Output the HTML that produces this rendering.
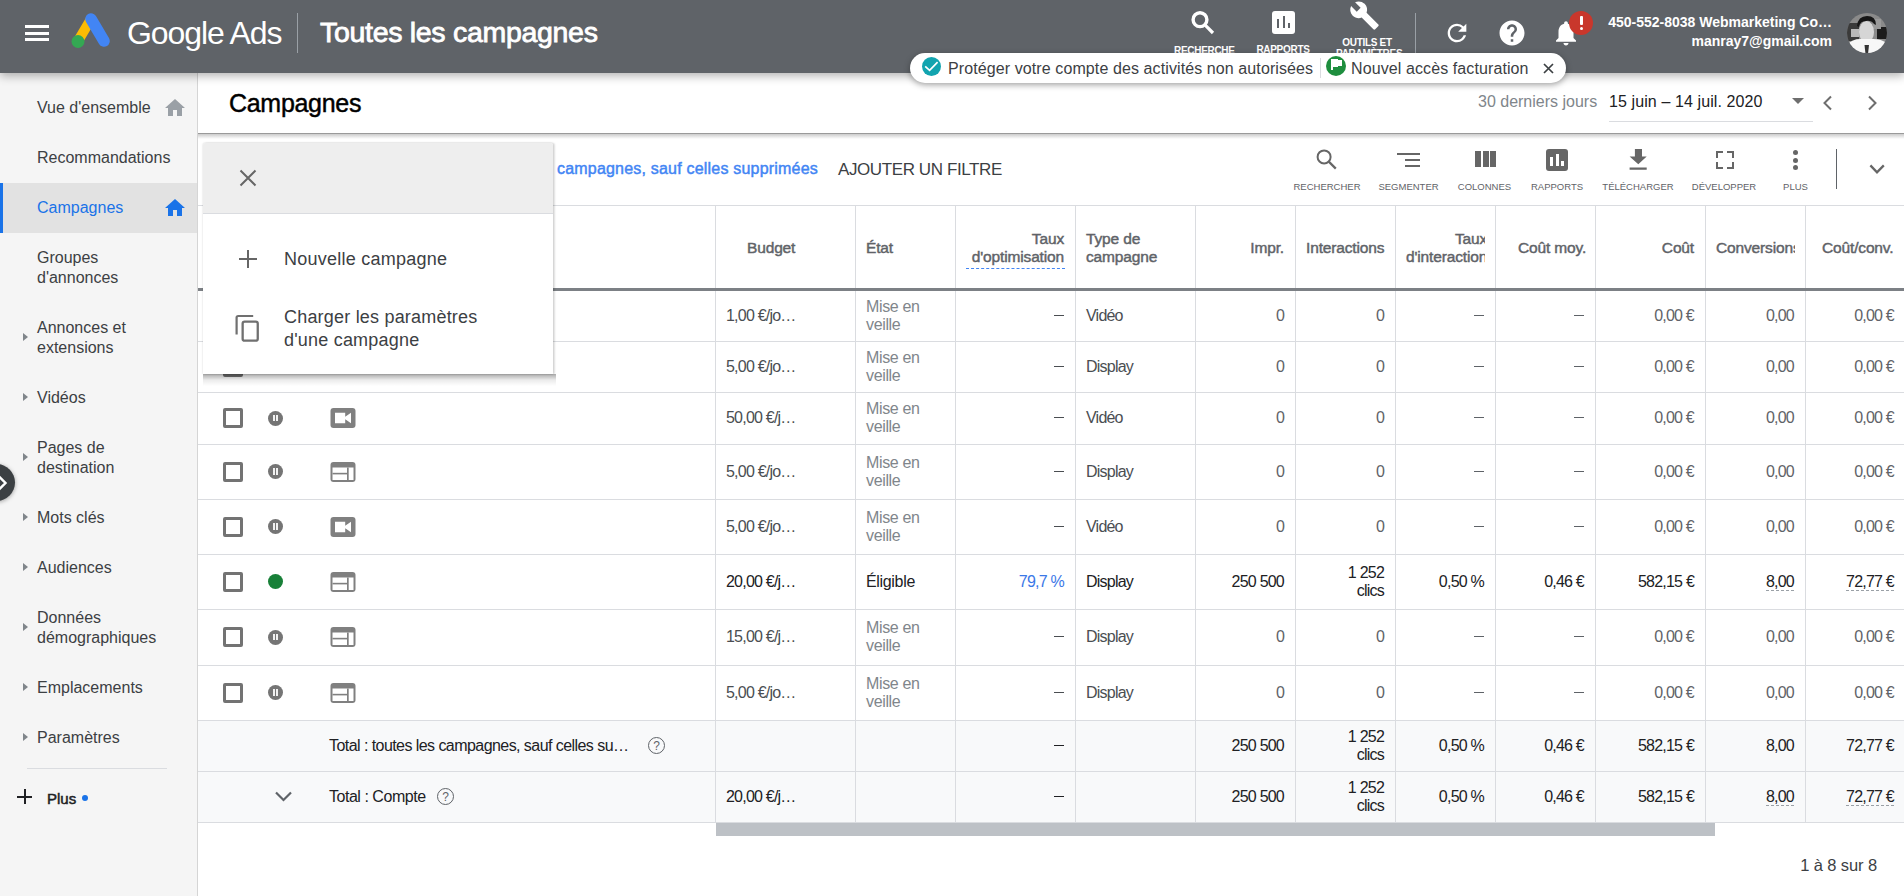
<!DOCTYPE html>
<html><head><meta charset="utf-8">
<style>
*{box-sizing:border-box;margin:0;padding:0}
html,body{width:1904px;height:896px;overflow:hidden;background:#fff;font-family:"Liberation Sans",sans-serif;color:#3c4043}
.a{position:absolute}
.nw{white-space:nowrap}
#top{position:absolute;left:0;top:0;width:1904px;height:73px;background:#5f6368;z-index:5;box-shadow:0 3px 9px rgba(0,0,0,.3)}
#side{position:absolute;left:0;top:72px;width:198px;height:824px;background:#f5f5f5;border-right:1px solid #d5d5d5;z-index:2}
.si{position:absolute;left:37px;font-size:16px;line-height:20px;color:#3c4043;white-space:nowrap}
.tri{position:absolute;left:22.5px;width:0;height:0;border-top:4.5px solid transparent;border-bottom:4.5px solid transparent;border-left:5px solid #80868b}
.hd{position:absolute;font-size:15.5px;color:#5f6368;line-height:18px;white-space:nowrap;letter-spacing:-0.15px;-webkit-text-stroke:0.45px #5f6368}
.vl{position:absolute;top:206px;width:1px;height:616px;background:#dadce0}
.hl{position:absolute;left:198px;width:1706px;height:1px;background:#dadce0}
.c{position:absolute;font-size:16px;line-height:18px;white-space:nowrap;letter-spacing:-0.78px}
.r{text-align:right}
</style></head><body>

<div id="top">
 <div class="a" style="left:25px;top:25px;width:24px;height:3px;background:#fff"></div>
 <div class="a" style="left:25px;top:31.5px;width:24px;height:3px;background:#fff"></div>
 <div class="a" style="left:25px;top:38px;width:24px;height:3px;background:#fff"></div>
 <svg class="a" style="left:70px;top:12px" width="42" height="38" viewBox="0 0 42 38">
  <line x1="21" y1="7" x2="8" y2="29" stroke="#fbbc04" stroke-width="10" stroke-linecap="round"/>
  <line x1="21" y1="7" x2="34" y2="29" stroke="#4285f4" stroke-width="11.5" stroke-linecap="round"/>
  <circle cx="8" cy="29.5" r="6.5" fill="#34a853"/>
 </svg>
 <div class="a nw" style="left:127px;top:13px;font-size:32px;line-height:40px;color:#fff;letter-spacing:-1.1px">Google Ads</div>
 <div class="a" style="left:297px;top:13px;width:1px;height:40px;background:#9aa0a6"></div>
 <div class="a nw" style="left:320px;top:14px;font-size:28.5px;line-height:36px;color:#fff;letter-spacing:-0.3px;-webkit-text-stroke:0.8px #fff">Toutes les campagnes</div>

<svg class="a" style="left:1180px;top:4px" width="48" height="36" viewBox="0 0 48 36"><circle cx="20" cy="15.7" r="6.9" stroke="#fff" stroke-width="3.4" fill="none"/><path d="M25.2 21.2 L33 29" stroke="#fff" stroke-width="3.2"/></svg>
<div class="a nw" style="left:1174px;top:44.5px;width:58px;text-align:center;font-size:10px;font-weight:700;color:#fff;letter-spacing:-0.3px">RECHERCHE</div>
<div class="a" style="left:1272px;top:10.5px;width:23px;height:23px;background:#fff;border-radius:3px"></div>
<div class="a" style="left:1277px;top:19.2px;width:2px;height:8.7px;background:#5f6368"></div>
<div class="a" style="left:1282.5px;top:16.1px;width:2px;height:11.8px;background:#5f6368"></div>
<div class="a" style="left:1287.7px;top:23.2px;width:2px;height:4.7px;background:#5f6368"></div>
<div class="a nw" style="left:1256px;top:43.5px;width:54px;text-align:center;font-size:10px;font-weight:700;color:#fff;letter-spacing:-0.3px">RAPPORTS</div>
<svg class="a" style="left:1348.5px;top:-0.5px" width="31" height="31" viewBox="0 0 24 24"><path fill="#fff" d="M22.7 19l-9.1-9.1c.9-2.3.4-5-1.5-6.9-2-2-5-2.4-7.4-1.3L9 6 6 9 1.6 4.7C.4 7.1.9 10.1 2.9 12.1c1.9 1.9 4.6 2.4 6.9 1.5l9.1 9.1c.4.4 1 .4 1.4 0l2.3-2.3c.5-.4.5-1.1.1-1.4z"/></svg>
<div class="a nw" style="left:1336px;top:37px;width:62px;text-align:center;font-size:10px;line-height:11px;font-weight:700;color:#fff;letter-spacing:-0.3px">OUTILS ET<br>PARAMÈTRES</div>
<div class="a" style="left:1415px;top:13px;width:1px;height:47px;background:#9aa0a6"></div>
<svg class="a" style="left:1443px;top:19px" width="28" height="28" viewBox="0 0 24 24"><path fill="#fff" d="M17.65 6.35A7.958 7.958 0 0 0 12 4c-4.42 0-7.99 3.58-7.99 8s3.57 8 7.99 8c3.73 0 6.84-2.55 7.73-6h-2.08A5.99 5.99 0 0 1 12 18c-3.31 0-6-2.69-6-6s2.69-6 6-6c1.66 0 3.14.69 4.22 1.78L13 11h7V4l-2.35 2.35z"/></svg>
<svg class="a" style="left:1497px;top:18px" width="30" height="30" viewBox="0 0 24 24"><path fill="#fff" d="M12 2C6.48 2 2 6.48 2 12s4.48 10 10 10 10-4.48 10-10S17.52 2 12 2zm1 17h-2v-2h2v2zm2.07-7.75l-.9.92C13.45 12.9 13 13.5 13 15h-2v-.5c0-1.1.45-2.1 1.17-2.83l1.24-1.26c.37-.36.59-.86.59-1.41 0-1.1-.9-2-2-2s-2 .9-2 2H8c0-2.21 1.79-4 4-4s4 1.79 4 4c0 .88-.36 1.68-.93 2.25z"/></svg>
<svg class="a" style="left:1551px;top:18px" width="30" height="30" viewBox="0 0 24 24"><path fill="#fff" d="M12 22c1.1 0 2-.9 2-2h-4c0 1.1.89 2 2 2zm6-6v-5c0-3.07-1.64-5.64-4.5-6.32V4c0-.83-.67-1.5-1.5-1.5s-1.5.67-1.5 1.5v.68C7.63 5.36 6 7.92 6 11v5l-2 2v1h16v-1l-2-2z"/></svg>
<div class="a" style="left:1569px;top:11px;width:24px;height:24px;border-radius:50%;background:#c9372c"></div>
<div class="a" style="left:1579.5px;top:16px;width:3px;height:9px;background:#fff;border-radius:1px"></div>
<div class="a" style="left:1579.5px;top:27px;width:3px;height:3px;background:#fff;border-radius:50%"></div>
<div class="a nw" style="left:1600px;top:13px;width:232px;text-align:right;font-size:14px;line-height:19px;font-weight:700;color:#fff">450-552-8038 Webmarketing Co…<br>manray7@gmail.com</div>
<svg class="a" style="left:1847px;top:13px" width="40" height="40" viewBox="0 0 40 40">
  <defs><clipPath id="av"><circle cx="20" cy="20" r="20"/></clipPath></defs>
  <g clip-path="url(#av)">
   <rect width="40" height="40" fill="#8a8a8a"/>
   <rect x="0" y="10" width="12" height="18" fill="#3a3a3a"/>
   <rect x="4" y="16" width="8" height="8" fill="#b9b9b9"/>
   <rect x="30" y="14" width="10" height="12" fill="#1c1c1c"/>
   <rect x="26" y="6" width="8" height="10" fill="#9a9a9a"/>
   <ellipse cx="19.5" cy="19" rx="7.5" ry="11" fill="#d6d6d6"/>
   <path d="M10 13 Q11 3 20 3 Q29 3 29 12 L27 11 Q24 7 19 8 Q13 8 12 14 Z" fill="#161616"/>
   <path d="M-2 40 L-2 34 Q4 26 13 26 L26 26 Q36 26 42 32 L42 40 Z" fill="#f7f7f7"/>
   <path d="M17.5 32 L22 32 L21 41 L18.5 41 Z" fill="#333"/>
  </g>
 </svg>
</div>
</div>

<div id="side">
<div class="a" style="left:0;top:111px;width:197px;height:50px;background:#e2e2e2"></div>
<div class="a" style="left:0;top:111px;width:3px;height:50px;background:#1a73e8"></div>
<div class="si" style="top:26px;color:#3c4043">Vue d'ensemble</div>
<svg class="a" style="left:163px;top:24px" width="24" height="24" viewBox="0 0 24 24"><path fill="#9aa0a6" d="M10 20v-6h4v6h5v-8h3L12 3 2 12h3v8z"/></svg>
<div class="si" style="top:76px;color:#3c4043">Recommandations</div>
<div class="si" style="top:126px;color:#1a73e8">Campagnes</div>
<svg class="a" style="left:163px;top:124px" width="24" height="24" viewBox="0 0 24 24"><path fill="#1a73e8" d="M10 20v-6h4v6h5v-8h3L12 3 2 12h3v8z"/></svg>
<div class="si" style="top:176px;color:#3c4043">Groupes<br>d'annonces</div>
<div class="si" style="top:246px;color:#3c4043">Annonces et<br>extensions</div><div class="tri" style="top:261.0px"></div>
<div class="si" style="top:316px;color:#3c4043">Vidéos</div><div class="tri" style="top:321.0px"></div>
<div class="si" style="top:366px;color:#3c4043">Pages de<br>destination</div><div class="tri" style="top:381.0px"></div>
<div class="si" style="top:436px;color:#3c4043">Mots clés</div><div class="tri" style="top:441.0px"></div>
<div class="si" style="top:486px;color:#3c4043">Audiences</div><div class="tri" style="top:491.0px"></div>
<div class="si" style="top:536px;color:#3c4043">Données<br>démographiques</div><div class="tri" style="top:551.0px"></div>
<div class="si" style="top:606px;color:#3c4043">Emplacements</div><div class="tri" style="top:611.0px"></div>
<div class="si" style="top:656px;color:#3c4043">Paramètres</div><div class="tri" style="top:661.0px"></div>
<div class="a" style="left:27px;top:696px;width:140px;height:1px;background:#dadce0"></div>
<div class="a" style="left:17px;top:724px;width:15px;height:2px;background:#202124"></div>
<div class="a" style="left:23.5px;top:717px;width:2px;height:15px;background:#202124"></div>
<div class="a nw" style="left:47px;top:717.5px;font-size:15px;line-height:18px;color:#202124;-webkit-text-stroke:0.5px #202124">Plus</div>
<div class="a" style="left:82px;top:723px;width:6px;height:6px;border-radius:50%;background:#1a73e8"></div>
</div>
<div class="a" style="left:-22px;top:464px;width:37px;height:37px;border-radius:50%;background:#3c4043;box-shadow:0 1px 4px rgba(0,0,0,.35);z-index:6"></div>
<svg class="a" style="left:-2px;top:475px;z-index:7" width="12" height="16" viewBox="0 0 12 16"><path d="M1 1.5 L7.5 8 L1 14.5" stroke="#fff" stroke-width="2.4" fill="none"/></svg>
<div class="a" style="left:198px;top:72px;width:1706px;height:61px;background:#fff;z-index:1"></div>
<div class="a" style="left:198px;top:133px;width:1706px;height:1px;background:#9a9a9a;z-index:1"></div>
<div class="a" style="left:198px;top:134px;width:1706px;height:5px;background:linear-gradient(rgba(0,0,0,.2),rgba(0,0,0,0));z-index:1"></div>
<div class="a nw" style="left:229px;top:88px;font-size:25px;line-height:30px;color:#000;letter-spacing:-0.3px;-webkit-text-stroke:0.45px #000;z-index:2">Campagnes</div>
<div class="a nw" style="left:1478px;top:92px;font-size:16px;line-height:20px;color:#80868b;z-index:2">30 derniers jours</div>
<div class="a nw" style="left:1609px;top:92px;font-size:16px;line-height:20px;color:#202124;z-index:2;letter-spacing:0.1px">15 juin – 14 juil. 2020</div>
<div class="a" style="left:1609px;top:121px;width:204px;height:1px;background:#dadce0;z-index:2"></div>
<div class="a" style="left:1792px;top:98px;width:0;height:0;border-left:6px solid transparent;border-right:6px solid transparent;border-top:6px solid #6e6e6e;z-index:2"></div>
<svg class="a" style="left:1820px;top:94px;z-index:2" width="16" height="18" viewBox="0 0 16 18"><path d="M11 2.5 L4.5 9 L11 15.5" stroke="#6e6e6e" stroke-width="2" fill="none"/></svg>
<svg class="a" style="left:1864px;top:94px;z-index:2" width="16" height="18" viewBox="0 0 16 18"><path d="M5 2.5 L11.5 9 L5 15.5" stroke="#6e6e6e" stroke-width="2" fill="none"/></svg>

<div class="a" style="left:910px;top:53px;width:656px;height:30px;border-radius:15px;background:#fff;box-shadow:0 2px 6px rgba(0,0,0,.35);z-index:10">
 <div class="a" style="left:12px;top:4px;width:19px;height:19px;border-radius:50%;background:#12a4af"></div>
 <svg class="a" style="left:12px;top:4px" width="19" height="19" viewBox="0 0 19 19"><path d="M3.2 9.3 L7.6 13.4 L15.6 5.2" stroke="#fff" stroke-width="1.7" fill="none"/></svg>
 <div class="a nw" style="left:38px;top:6px;font-size:16px;line-height:20px;color:#3c4043;letter-spacing:0.1px">Protéger votre compte des activités non autorisées</div>
 <div class="a" style="left:410px;top:5px;width:1px;height:20px;background:#dadce0"></div>
 <div class="a" style="left:416px;top:3px;width:20px;height:20px;border-radius:50%;background:#1e8e3e"></div>
 <div class="a" style="left:421px;top:6px;width:2px;height:11px;background:#fff"></div>
 <div class="a" style="left:423px;top:6px;width:5px;height:7.5px;background:#fff"></div>
 <div class="a" style="left:427.5px;top:7.3px;width:4.5px;height:6.2px;background:#fff"></div>
 <div class="a nw" style="left:441px;top:6px;font-size:16px;line-height:20px;color:#3c4043;letter-spacing:0.1px">Nouvel accès facturation</div>
 <svg class="a" style="left:633px;top:10px" width="11" height="11" viewBox="0 0 11 11"><path d="M1 1 L10 10 M10 1 L1 10" stroke="#3c4043" stroke-width="1.7"/></svg>
</div>

<div class="a nw" style="left:557px;top:159px;font-size:16px;line-height:20px;color:#4285f4;letter-spacing:0.2px;-webkit-text-stroke:0.45px #4285f4">campagnes, sauf celles supprimées</div>
<div class="a nw" style="left:838px;top:159px;font-size:17px;line-height:22px;color:#3c4043;letter-spacing:-0.4px">AJOUTER UN FILTRE</div>

<svg class="a" style="left:1310px;top:142px" width="34" height="34" viewBox="0 0 34 34"><circle cx="14.1" cy="14.9" r="6.5" stroke="#666" stroke-width="2" fill="none"/><path d="M18.8 19.6 L25.8 26.6" stroke="#666" stroke-width="2.2"/></svg>
<div class="a nw" style="left:1277px;top:181px;width:100px;text-align:center;font-size:9.5px;line-height:12px;color:#5f6368;letter-spacing:0px">RECHERCHER</div>
<div class="a" style="left:1397px;top:153px;width:23px;height:2px;background:#666"></div><div class="a" style="left:1405px;top:159px;width:15px;height:2px;background:#666"></div><div class="a" style="left:1405px;top:165px;width:15px;height:2px;background:#666"></div>
<div class="a nw" style="left:1358.5px;top:181px;width:100px;text-align:center;font-size:9.5px;line-height:12px;color:#5f6368;letter-spacing:0px">SEGMENTER</div>
<div class="a" style="left:1475px;top:151px;width:6px;height:16px;background:#666"></div><div class="a" style="left:1482.5px;top:151px;width:6px;height:16px;background:#666"></div><div class="a" style="left:1490px;top:151px;width:6px;height:16px;background:#666"></div>
<div class="a nw" style="left:1434.5px;top:181px;width:100px;text-align:center;font-size:9.5px;line-height:12px;color:#5f6368;letter-spacing:0px">COLONNES</div>
<div class="a" style="left:1546px;top:149px;width:22px;height:22px;background:#666;border-radius:3px"></div><div class="a" style="left:1550px;top:157.1px;width:3.2px;height:9px;background:#fff"></div><div class="a" style="left:1555.5px;top:153.7px;width:3.2px;height:12.3px;background:#fff"></div><div class="a" style="left:1560.8px;top:160.9px;width:3.2px;height:5.1px;background:#fff"></div>
<div class="a nw" style="left:1507px;top:181px;width:100px;text-align:center;font-size:9.5px;line-height:12px;color:#5f6368;letter-spacing:0px">RAPPORTS</div>
<svg class="a" style="left:1620px;top:142px" width="34" height="34" viewBox="0 0 34 34"><path fill="#666" d="M14.9 7 H22 V14.6 H26.7 L18.3 22.3 L9.6 14.6 H14.9 Z M9.6 25.4 H26.7 V27.8 H9.6 Z"/></svg>
<div class="a nw" style="left:1588px;top:181px;width:100px;text-align:center;font-size:9.5px;line-height:12px;color:#5f6368;letter-spacing:0px">TÉLÉCHARGER</div>
<svg class="a" style="left:1713px;top:148px" width="24" height="24" viewBox="0 0 24 24"><path fill="#666" d="M5 10H3V3h7v2H5v5zm0 4H3v7h7v-2H5v-5zm14 5h-5v2h7v-7h-2v5zM14 3v2h5v5h2V3h-7z"/></svg>
<div class="a nw" style="left:1674px;top:181px;width:100px;text-align:center;font-size:9.5px;line-height:12px;color:#5f6368;letter-spacing:0px">DÉVELOPPER</div>
<div class="a" style="left:1793px;top:150px;width:5px;height:5px;border-radius:50%;background:#666"></div><div class="a" style="left:1793px;top:157.5px;width:5px;height:5px;border-radius:50%;background:#666"></div><div class="a" style="left:1793px;top:165px;width:5px;height:5px;border-radius:50%;background:#666"></div>
<div class="a nw" style="left:1745.5px;top:181px;width:100px;text-align:center;font-size:9.5px;line-height:12px;color:#5f6368;letter-spacing:0px">PLUS</div>
<div class="a" style="left:1836px;top:149px;width:1px;height:40px;background:#5f6368"></div>
<svg class="a" style="left:1868px;top:162px" width="18" height="14" viewBox="0 0 18 14"><path d="M2.4 3.4 L9 10.4 L15.8 3.4" stroke="#666" stroke-width="2.3" fill="none"/></svg>
<div class="a" style="left:198px;top:205px;width:1706px;height:1px;background:#dadce0"></div>
<div class="a" style="left:198px;top:721px;width:1706px;height:101px;background:#f8f9fa"></div>
<div class="vl" style="left:715px"></div>
<div class="vl" style="left:855px"></div>
<div class="vl" style="left:955px"></div>
<div class="vl" style="left:1075px"></div>
<div class="vl" style="left:1195px"></div>
<div class="vl" style="left:1295px"></div>
<div class="vl" style="left:1395px"></div>
<div class="vl" style="left:1495px"></div>
<div class="vl" style="left:1595px"></div>
<div class="vl" style="left:1705px"></div>
<div class="vl" style="left:1805px"></div>
<div class="a" style="left:198px;top:288px;width:1706px;height:3px;background:#7c8085"></div>
<div class="hl" style="top:341px"></div>
<div class="hl" style="top:392px"></div>
<div class="hl" style="top:444px"></div>
<div class="hl" style="top:499px"></div>
<div class="hl" style="top:554px"></div>
<div class="hl" style="top:609px"></div>
<div class="hl" style="top:665px"></div>
<div class="hl" style="top:720px"></div>
<div class="hl" style="top:771px"></div>
<div class="hl" style="top:822px"></div>
<div class="a" style="left:716px;top:823px;width:999px;height:13px;background:#bdc1c6"></div>
<div class="a nw" style="left:1700px;top:855px;width:177px;text-align:right;font-size:16.5px;line-height:20px;color:#3c4043;letter-spacing:-0.1px">1 à 8 sur 8</div>
<div class="hd" style="left:747px;top:238.7px">Budget</div>
<div class="hd" style="left:866px;top:238.7px">État</div>
<div class="hd" style="left:864px;top:229.7px;width:200px;text-align:right">Taux<br>d'optimisation</div>
<div class="a" style="left:966px;top:268px;width:99px;height:0;border-top:1px dashed #4285f4"></div>
<div class="hd" style="left:1086px;top:229.7px">Type de<br>campagne</div>
<div class="hd" style="left:1084px;top:238.7px;width:200px;text-align:right">Impr.</div>
<div class="hd" style="left:1306px;top:238.7px">Interactions</div>
<div class="a" style="left:1396px;top:229px;width:89px;height:40px;overflow:hidden"><div class="hd" style="left:10px;top:0.7px;text-align:right">Taux<br>d'interaction</div></div>
<div class="hd" style="left:1518px;top:238.7px">Coût moy.</div>
<div class="hd" style="left:1494px;top:238.7px;width:200px;text-align:right">Coût</div>
<div class="a" style="left:1706px;top:236px;width:89px;height:22px;overflow:hidden"><div class="hd" style="left:10px;top:2.7px">Conversions</div></div>
<div class="hd" style="left:1822px;top:238.7px">Coût/conv.</div>
<div class="a" style="left:223px;top:305.5px;width:20px;height:20px;border:3px solid #737373;border-radius:2px"></div>
<div class="a" style="left:268px;top:308.0px;width:15px;height:15px;border-radius:50%;background:#757575"></div><div class="a" style="left:273px;top:312.2px;width:1.7px;height:6.6px;background:#f1f1f1"></div><div class="a" style="left:276.3px;top:312.2px;width:1.7px;height:6.6px;background:#f1f1f1"></div>
<svg class="a" style="left:330px;top:305.5px" width="26" height="20" viewBox="0 0 26 20"><rect x="0.5" y="0" width="25" height="20" rx="3" fill="#808080"/><path d="M5 4.7 H15.2 V8.8 L21 4.7 V15.2 L15.2 11.2 V15.2 H5 Z" fill="#fff"/></svg>
<div class="c" style="left:726px;top:306.5px;color:#4a4e52;">1,00 €/jo…</div>
<div class="c" style="left:866px;top:297.5px;color:#80868b;letter-spacing:-0.35px">Mise en<br>veille</div>
<div class="a" style="left:1054px;top:315px;width:10px;height:1px;background:#4a4e52"></div>
<div class="c" style="left:1086px;top:306.5px;color:#4a4e52;">Vidéo</div>
<div class="c r" style="left:1084px;top:306.5px;width:200px;color:#5f6368;">0</div>
<div class="c r" style="left:1184px;top:306.5px;width:200px;color:#5f6368;">0</div>
<div class="a" style="left:1474px;top:315px;width:10px;height:1px;background:#5f6368"></div>
<div class="a" style="left:1574px;top:315px;width:10px;height:1px;background:#5f6368"></div>
<div class="c r" style="left:1494px;top:306.5px;width:200px;color:#5f6368;">0,00 €</div>
<div class="c r" style="left:1594px;top:306.5px;width:200px;color:#5f6368;">0,00</div>
<div class="c r" style="left:1694px;top:306.5px;width:200px;color:#5f6368;">0,00 €</div>
<div class="a" style="left:223px;top:356.5px;width:20px;height:20px;border:3px solid #737373;border-radius:2px"></div>
<div class="c" style="left:726px;top:357.5px;color:#4a4e52;">5,00 €/jo…</div>
<div class="c" style="left:866px;top:348.5px;color:#80868b;letter-spacing:-0.35px">Mise en<br>veille</div>
<div class="a" style="left:1054px;top:366px;width:10px;height:1px;background:#4a4e52"></div>
<div class="c" style="left:1086px;top:357.5px;color:#4a4e52;">Display</div>
<div class="c r" style="left:1084px;top:357.5px;width:200px;color:#5f6368;">0</div>
<div class="c r" style="left:1184px;top:357.5px;width:200px;color:#5f6368;">0</div>
<div class="a" style="left:1474px;top:366px;width:10px;height:1px;background:#5f6368"></div>
<div class="a" style="left:1574px;top:366px;width:10px;height:1px;background:#5f6368"></div>
<div class="c r" style="left:1494px;top:357.5px;width:200px;color:#5f6368;">0,00 €</div>
<div class="c r" style="left:1594px;top:357.5px;width:200px;color:#5f6368;">0,00</div>
<div class="c r" style="left:1694px;top:357.5px;width:200px;color:#5f6368;">0,00 €</div>
<div class="a" style="left:223px;top:408.0px;width:20px;height:20px;border:3px solid #737373;border-radius:2px"></div>
<div class="a" style="left:268px;top:410.5px;width:15px;height:15px;border-radius:50%;background:#757575"></div><div class="a" style="left:273px;top:414.7px;width:1.7px;height:6.6px;background:#f1f1f1"></div><div class="a" style="left:276.3px;top:414.7px;width:1.7px;height:6.6px;background:#f1f1f1"></div>
<svg class="a" style="left:330px;top:408.0px" width="26" height="20" viewBox="0 0 26 20"><rect x="0.5" y="0" width="25" height="20" rx="3" fill="#808080"/><path d="M5 4.7 H15.2 V8.8 L21 4.7 V15.2 L15.2 11.2 V15.2 H5 Z" fill="#fff"/></svg>
<div class="c" style="left:726px;top:409.0px;color:#4a4e52;">50,00 €/j…</div>
<div class="c" style="left:866px;top:400.0px;color:#80868b;letter-spacing:-0.35px">Mise en<br>veille</div>
<div class="a" style="left:1054px;top:417px;width:10px;height:1px;background:#4a4e52"></div>
<div class="c" style="left:1086px;top:409.0px;color:#4a4e52;">Vidéo</div>
<div class="c r" style="left:1084px;top:409.0px;width:200px;color:#5f6368;">0</div>
<div class="c r" style="left:1184px;top:409.0px;width:200px;color:#5f6368;">0</div>
<div class="a" style="left:1474px;top:417px;width:10px;height:1px;background:#5f6368"></div>
<div class="a" style="left:1574px;top:417px;width:10px;height:1px;background:#5f6368"></div>
<div class="c r" style="left:1494px;top:409.0px;width:200px;color:#5f6368;">0,00 €</div>
<div class="c r" style="left:1594px;top:409.0px;width:200px;color:#5f6368;">0,00</div>
<div class="c r" style="left:1694px;top:409.0px;width:200px;color:#5f6368;">0,00 €</div>
<div class="a" style="left:223px;top:461.5px;width:20px;height:20px;border:3px solid #737373;border-radius:2px"></div>
<div class="a" style="left:268px;top:464.0px;width:15px;height:15px;border-radius:50%;background:#757575"></div><div class="a" style="left:273px;top:468.2px;width:1.7px;height:6.6px;background:#f1f1f1"></div><div class="a" style="left:276.3px;top:468.2px;width:1.7px;height:6.6px;background:#f1f1f1"></div>
<svg class="a" style="left:330px;top:461.5px" width="26" height="20" viewBox="0 0 26 20"><rect x="0.5" y="0" width="25" height="20" rx="3" fill="#808080"/><rect x="2.5" y="5.5" width="21" height="12.5" fill="#fff"/><rect x="2.5" y="10.8" width="14.5" height="1.6" fill="#808080"/><rect x="17" y="5.5" width="1.7" height="12.5" fill="#808080"/></svg>
<div class="c" style="left:726px;top:462.5px;color:#4a4e52;">5,00 €/jo…</div>
<div class="c" style="left:866px;top:453.5px;color:#80868b;letter-spacing:-0.35px">Mise en<br>veille</div>
<div class="a" style="left:1054px;top:471px;width:10px;height:1px;background:#4a4e52"></div>
<div class="c" style="left:1086px;top:462.5px;color:#4a4e52;">Display</div>
<div class="c r" style="left:1084px;top:462.5px;width:200px;color:#5f6368;">0</div>
<div class="c r" style="left:1184px;top:462.5px;width:200px;color:#5f6368;">0</div>
<div class="a" style="left:1474px;top:471px;width:10px;height:1px;background:#5f6368"></div>
<div class="a" style="left:1574px;top:471px;width:10px;height:1px;background:#5f6368"></div>
<div class="c r" style="left:1494px;top:462.5px;width:200px;color:#5f6368;">0,00 €</div>
<div class="c r" style="left:1594px;top:462.5px;width:200px;color:#5f6368;">0,00</div>
<div class="c r" style="left:1694px;top:462.5px;width:200px;color:#5f6368;">0,00 €</div>
<div class="a" style="left:223px;top:516.5px;width:20px;height:20px;border:3px solid #737373;border-radius:2px"></div>
<div class="a" style="left:268px;top:519.0px;width:15px;height:15px;border-radius:50%;background:#757575"></div><div class="a" style="left:273px;top:523.2px;width:1.7px;height:6.6px;background:#f1f1f1"></div><div class="a" style="left:276.3px;top:523.2px;width:1.7px;height:6.6px;background:#f1f1f1"></div>
<svg class="a" style="left:330px;top:516.5px" width="26" height="20" viewBox="0 0 26 20"><rect x="0.5" y="0" width="25" height="20" rx="3" fill="#808080"/><path d="M5 4.7 H15.2 V8.8 L21 4.7 V15.2 L15.2 11.2 V15.2 H5 Z" fill="#fff"/></svg>
<div class="c" style="left:726px;top:517.5px;color:#4a4e52;">5,00 €/jo…</div>
<div class="c" style="left:866px;top:508.5px;color:#80868b;letter-spacing:-0.35px">Mise en<br>veille</div>
<div class="a" style="left:1054px;top:526px;width:10px;height:1px;background:#4a4e52"></div>
<div class="c" style="left:1086px;top:517.5px;color:#4a4e52;">Vidéo</div>
<div class="c r" style="left:1084px;top:517.5px;width:200px;color:#5f6368;">0</div>
<div class="c r" style="left:1184px;top:517.5px;width:200px;color:#5f6368;">0</div>
<div class="a" style="left:1474px;top:526px;width:10px;height:1px;background:#5f6368"></div>
<div class="a" style="left:1574px;top:526px;width:10px;height:1px;background:#5f6368"></div>
<div class="c r" style="left:1494px;top:517.5px;width:200px;color:#5f6368;">0,00 €</div>
<div class="c r" style="left:1594px;top:517.5px;width:200px;color:#5f6368;">0,00</div>
<div class="c r" style="left:1694px;top:517.5px;width:200px;color:#5f6368;">0,00 €</div>
<div class="a" style="left:223px;top:627.0px;width:20px;height:20px;border:3px solid #737373;border-radius:2px"></div>
<div class="a" style="left:268px;top:629.5px;width:15px;height:15px;border-radius:50%;background:#757575"></div><div class="a" style="left:273px;top:633.7px;width:1.7px;height:6.6px;background:#f1f1f1"></div><div class="a" style="left:276.3px;top:633.7px;width:1.7px;height:6.6px;background:#f1f1f1"></div>
<svg class="a" style="left:330px;top:627.0px" width="26" height="20" viewBox="0 0 26 20"><rect x="0.5" y="0" width="25" height="20" rx="3" fill="#808080"/><rect x="2.5" y="5.5" width="21" height="12.5" fill="#fff"/><rect x="2.5" y="10.8" width="14.5" height="1.6" fill="#808080"/><rect x="17" y="5.5" width="1.7" height="12.5" fill="#808080"/></svg>
<div class="c" style="left:726px;top:628.0px;color:#4a4e52;">15,00 €/j…</div>
<div class="c" style="left:866px;top:619.0px;color:#80868b;letter-spacing:-0.35px">Mise en<br>veille</div>
<div class="a" style="left:1054px;top:636px;width:10px;height:1px;background:#4a4e52"></div>
<div class="c" style="left:1086px;top:628.0px;color:#4a4e52;">Display</div>
<div class="c r" style="left:1084px;top:628.0px;width:200px;color:#5f6368;">0</div>
<div class="c r" style="left:1184px;top:628.0px;width:200px;color:#5f6368;">0</div>
<div class="a" style="left:1474px;top:636px;width:10px;height:1px;background:#5f6368"></div>
<div class="a" style="left:1574px;top:636px;width:10px;height:1px;background:#5f6368"></div>
<div class="c r" style="left:1494px;top:628.0px;width:200px;color:#5f6368;">0,00 €</div>
<div class="c r" style="left:1594px;top:628.0px;width:200px;color:#5f6368;">0,00</div>
<div class="c r" style="left:1694px;top:628.0px;width:200px;color:#5f6368;">0,00 €</div>
<div class="a" style="left:223px;top:682.5px;width:20px;height:20px;border:3px solid #737373;border-radius:2px"></div>
<div class="a" style="left:268px;top:685.0px;width:15px;height:15px;border-radius:50%;background:#757575"></div><div class="a" style="left:273px;top:689.2px;width:1.7px;height:6.6px;background:#f1f1f1"></div><div class="a" style="left:276.3px;top:689.2px;width:1.7px;height:6.6px;background:#f1f1f1"></div>
<svg class="a" style="left:330px;top:682.5px" width="26" height="20" viewBox="0 0 26 20"><rect x="0.5" y="0" width="25" height="20" rx="3" fill="#808080"/><rect x="2.5" y="5.5" width="21" height="12.5" fill="#fff"/><rect x="2.5" y="10.8" width="14.5" height="1.6" fill="#808080"/><rect x="17" y="5.5" width="1.7" height="12.5" fill="#808080"/></svg>
<div class="c" style="left:726px;top:683.5px;color:#4a4e52;">5,00 €/jo…</div>
<div class="c" style="left:866px;top:674.5px;color:#80868b;letter-spacing:-0.35px">Mise en<br>veille</div>
<div class="a" style="left:1054px;top:692px;width:10px;height:1px;background:#4a4e52"></div>
<div class="c" style="left:1086px;top:683.5px;color:#4a4e52;">Display</div>
<div class="c r" style="left:1084px;top:683.5px;width:200px;color:#5f6368;">0</div>
<div class="c r" style="left:1184px;top:683.5px;width:200px;color:#5f6368;">0</div>
<div class="a" style="left:1474px;top:692px;width:10px;height:1px;background:#5f6368"></div>
<div class="a" style="left:1574px;top:692px;width:10px;height:1px;background:#5f6368"></div>
<div class="c r" style="left:1494px;top:683.5px;width:200px;color:#5f6368;">0,00 €</div>
<div class="c r" style="left:1594px;top:683.5px;width:200px;color:#5f6368;">0,00</div>
<div class="c r" style="left:1694px;top:683.5px;width:200px;color:#5f6368;">0,00 €</div>
<div class="a" style="left:223px;top:571.5px;width:20px;height:20px;border:3px solid #737373;border-radius:2px"></div>
<div class="a" style="left:268px;top:574.0px;width:15px;height:15px;border-radius:50%;background:#188038"></div>
<svg class="a" style="left:330px;top:571.5px" width="26" height="20" viewBox="0 0 26 20"><rect x="0.5" y="0" width="25" height="20" rx="3" fill="#808080"/><rect x="2.5" y="5.5" width="21" height="12.5" fill="#fff"/><rect x="2.5" y="10.8" width="14.5" height="1.6" fill="#808080"/><rect x="17" y="5.5" width="1.7" height="12.5" fill="#808080"/></svg>
<div class="c" style="left:726px;top:572.5px;color:#202124;">20,00 €/j…</div>
<div class="c" style="left:866px;top:572.5px;color:#202124;letter-spacing:-0.33px">Éligible</div>
<div class="c r" style="left:864px;top:572.5px;width:200px;color:#3b78e7;">79,7 %</div>
<div class="c" style="left:1086px;top:572.5px;color:#202124;">Display</div>
<div class="c r" style="left:1084px;top:572.5px;width:200px;color:#202124;">250 500</div>
<div class="c r" style="left:1184px;top:563.5px;width:200px;color:#202124;">1 252<br>clics</div>
<div class="c r" style="left:1284px;top:572.5px;width:200px;color:#202124;">0,50 %</div>
<div class="c r" style="left:1384px;top:572.5px;width:200px;color:#202124;">0,46 €</div>
<div class="c r" style="left:1494px;top:572.5px;width:200px;color:#202124;">582,15 €</div>
<div class="c r" style="left:1594px;top:572.5px;width:200px;color:#202124;">8,00</div>
<div class="c r" style="left:1694px;top:572.5px;width:200px;color:#202124;">72,77 €</div>
<div class="a" style="left:1766px;top:589.5px;width:28px;border-top:1px dashed #9aa0a6"></div>
<div class="a" style="left:1846px;top:589.5px;width:48px;border-top:1px dashed #9aa0a6"></div>
<div class="c" style="left:329px;top:736.5px;color:#202124;letter-spacing:-0.56px">Total : toutes les campagnes, sauf celles su…</div>
<div class="a" style="left:648px;top:736.5px;width:17px;height:17px;border:1.5px solid #5f6368;border-radius:50%"></div><div class="a nw" style="left:648px;top:738.5px;width:17px;text-align:center;font-size:12px;line-height:14px;color:#5f6368">?</div>
<div class="a" style="left:1054px;top:745px;width:10px;height:1px;background:#202124"></div>
<div class="c r" style="left:1084px;top:736.5px;width:200px;color:#202124;">250 500</div>
<div class="c r" style="left:1184px;top:727.5px;width:200px;color:#202124;">1 252<br>clics</div>
<div class="c r" style="left:1284px;top:736.5px;width:200px;color:#202124;">0,50 %</div>
<div class="c r" style="left:1384px;top:736.5px;width:200px;color:#202124;">0,46 €</div>
<div class="c r" style="left:1494px;top:736.5px;width:200px;color:#202124;">582,15 €</div>
<div class="c r" style="left:1594px;top:736.5px;width:200px;color:#202124;">8,00</div>
<div class="c r" style="left:1694px;top:736.5px;width:200px;color:#202124;">72,77 €</div>
<svg class="a" style="left:274px;top:788.5px" width="19" height="14" viewBox="0 0 19 14"><path d="M2 3.5 L9.5 11 L17 3.5" stroke="#5f6368" stroke-width="2.2" fill="none"/></svg>
<div class="c" style="left:329px;top:787.5px;color:#202124;letter-spacing:-0.47px">Total : Compte</div>
<div class="a" style="left:437px;top:787.5px;width:17px;height:17px;border:1.5px solid #5f6368;border-radius:50%"></div><div class="a nw" style="left:437px;top:789.5px;width:17px;text-align:center;font-size:12px;line-height:14px;color:#5f6368">?</div>
<div class="c" style="left:726px;top:787.5px;color:#202124;">20,00 €/j…</div>
<div class="a" style="left:1054px;top:796px;width:10px;height:1px;background:#202124"></div>
<div class="c r" style="left:1084px;top:787.5px;width:200px;color:#202124;">250 500</div>
<div class="c r" style="left:1184px;top:778.5px;width:200px;color:#202124;">1 252<br>clics</div>
<div class="c r" style="left:1284px;top:787.5px;width:200px;color:#202124;">0,50 %</div>
<div class="c r" style="left:1384px;top:787.5px;width:200px;color:#202124;">0,46 €</div>
<div class="c r" style="left:1494px;top:787.5px;width:200px;color:#202124;">582,15 €</div>
<div class="c r" style="left:1594px;top:787.5px;width:200px;color:#202124;">8,00</div>
<div class="c r" style="left:1694px;top:787.5px;width:200px;color:#202124;">72,77 €</div>
<div class="a" style="left:1766px;top:804.5px;width:28px;border-top:1px dashed #9aa0a6"></div>
<div class="a" style="left:1846px;top:804.5px;width:48px;border-top:1px dashed #9aa0a6"></div>
<div class="a" style="left:203px;top:374px;width:353px;height:12px;background:linear-gradient(rgba(0,0,0,.33),rgba(0,0,0,.08) 50%,rgba(0,0,0,0));z-index:4"></div>
<div class="a" style="left:203px;top:143px;width:350px;height:231px;background:#fff;box-shadow:0 0 2px rgba(0,0,0,.2),2px 0 2px rgba(0,0,0,.12);z-index:4;border-radius:2px 2px 0 0">
 <div class="a" style="left:0;top:0;width:350px;height:71px;background:#eeeeee;border-bottom:1px solid #dadce0;border-radius:2px 2px 0 0"></div>
 <svg class="a" style="left:36px;top:26px" width="18" height="18" viewBox="0 0 18 18"><path d="M1.5 1.5 L16.5 16.5 M16.5 1.5 L1.5 16.5" stroke="#666" stroke-width="2"/></svg>
 <div class="a" style="left:36px;top:115px;width:18px;height:2px;background:#666"></div>
 <div class="a" style="left:44px;top:107px;width:2px;height:18px;background:#666"></div>
 <div class="a nw" style="left:81px;top:105px;font-size:18px;line-height:22px;color:#3c4043;letter-spacing:0.25px">Nouvelle campagne</div>
 <svg class="a" style="left:28px;top:170px" width="32" height="32" viewBox="0 0 32 32"><path d="M5.6 21.5 V4.6 Q5.6 3 7.2 3 H22.2" stroke="#707070" stroke-width="2.2" fill="none"/><rect x="11.65" y="8.55" width="15.1" height="19.1" rx="2" stroke="#707070" stroke-width="2.3" fill="none"/></svg>
 <div class="a nw" style="left:81px;top:163px;font-size:18px;line-height:23px;color:#3c4043;letter-spacing:0.2px">Charger les paramètres<br>d'une campagne</div>
</div>

</body></html>
